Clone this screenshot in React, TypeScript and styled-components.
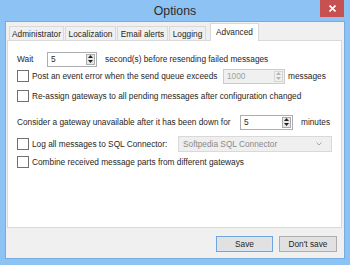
import * as React from 'react';
import styled, {createGlobalStyle} from 'styled-components';

const GlobalStyle = createGlobalStyle`
  html, body {
    margin: 0;
    padding: 0;
  }
  body {
    font-family: "Liberation Sans", Arial, sans-serif;
    font-size: 8.3px;
    color: #262626;
  }
`;

const SWindow = styled('div')`
  width: 350px;
  height: 265px;
  box-sizing: border-box;
  background: #8dc3f4;
  padding: 0 5px 6px 5px;
  display: flex;
  flex-direction: column;
`;

const STitleBar = styled('div')`
  height: 21px;
  display: grid;
  grid-template-columns: 1fr auto 1fr;
  align-items: start;
`;

const STitle = styled('div')`
  grid-column: 2;
  font-size: 12.3px;
  line-height: 22px;
  color: #2b2b2b;
`;

const SClose = styled('div')`
  grid-column: 3;
  justify-self: end;
  margin-right: 1px;
  width: 24px;
  height: 17px;
  background: #c75050;
  display: flex;
  align-items: center;
  justify-content: center;
`;

const SClient = styled('div')`
  flex: 1;
  border: 1px solid #78acdf;
  background: #f0f0f0;
  display: flex;
  flex-direction: column;
`;

const STabStrip = styled('div')`
  height: 19px;
  padding-left: 3px;
  display: flex;
  align-items: flex-end;
`;

const STab = styled('div')<{ $active?: boolean; $w: number }>`
  position: relative;
  z-index: ${p => (p.$active ? 2 : 0)};
  box-sizing: border-box;
  width: ${p => p.$w}px;
  height: ${p => (p.$active ? 18 : 15)}px;
  margin-left: ${p => (p.$active ? 4 : 1)}px;
  border: 1px solid #d9d9d9;
  border-bottom: 0;
  background: ${p => (p.$active ? '#ffffff' : '#f0f0f0')};
  display: flex;
  justify-content: center;
  padding-top: ${p => (p.$active ? 3 : 2)}px;
  white-space: nowrap;
  &:first-child {
    margin-left: 0;
  }
`;

const SPanel = styled('div')`
  position: relative;
  z-index: 1;
  margin: -1px 2px 0 1px;
  height: 188px;
  box-sizing: border-box;
  background: #ffffff;
  border: 1px solid #d9d9d9;
  padding: 9px 0 0 9px;
  display: flex;
  flex-direction: column;
`;

const SRow = styled('div')<{ $top: number }>`
  height: 16px;
  margin-top: ${p => p.$top}px;
  display: flex;
  align-items: center;
  white-space: nowrap;
`;

const SLabel = styled('span')<{ $w?: number; $ml?: number }>`
  display: inline-block;
  width: ${p => (p.$w ? `${p.$w}px` : 'auto')};
  margin-left: ${p => p.$ml || 0}px;
`;

const SCheck = styled('span')`
  width: 12px;
  height: 12px;
  box-sizing: border-box;
  border: 1px solid #707070;
  background: #fff;
  margin-right: 3px;
  flex: none;
`;

const SSpin = styled('div')<{ $w: number; $disabled?: boolean }>`
  width: ${p => p.$w}px;
  height: 15px;
  box-sizing: border-box;
  border: 1px solid ${p => (p.$disabled ? '#cccccc' : '#abadb3')};
  background: ${p => (p.$disabled ? '#f0f0f0' : '#ffffff')};
  color: ${p => (p.$disabled ? '#a0a0a0' : '#1e1e1e')};
  display: flex;
  align-items: center;
  padding-left: 3px;
  flex: none;
`;

const SSpinValue = styled('span')`
  flex: 1;
`;

const SSpinButtons = styled('div')<{ $disabled?: boolean }>`
  width: 9px;
  height: 11px;
  margin-right: 1px;
  box-sizing: border-box;
  border: 1px solid ${p => (p.$disabled ? '#d6d6d6' : '#acacac')};
  background: ${p => (p.$disabled ? '#f0f0f0' : '#e8e8e8')};
  display: flex;
  flex-direction: column;
  align-items: center;
  justify-content: space-around;
`;

const SCombo = styled('div')<{ $w: number }>`
  width: ${p => p.$w}px;
  height: 16px;
  box-sizing: border-box;
  border: 1px solid #d9d9d9;
  background: #efefef;
  color: #8a8a8a;
  display: flex;
  align-items: center;
  justify-content: space-between;
  padding: 0 9px 0 4px;
`;

const SButtonBar = styled('div')`
  flex: 1;
  display: flex;
  align-items: center;
  justify-content: flex-end;
  gap: 6px;
  padding: 1px 7px 0 0;
`;

const SButton = styled('div')<{ $default?: boolean; $w: number }>`
  width: ${p => p.$w}px;
  height: 16px;
  box-sizing: border-box;
  border: 1px solid ${p => (p.$default ? '#6aa5de' : '#adadad')};
  box-shadow: ${p => (p.$default ? 'inset 0 0 0 1px #d4e6f7' : 'none')};
  background: #e1e1e1;
  display: flex;
  align-items: center;
  justify-content: center;
`;

const Arrow = ({up, color}: { up?: boolean; color: string }) => (
  <svg width="5" height="3" viewBox="0 0 5 3">
    <polygon points={up ? '2.5,0 5,3 0,3' : '0,0 5,0 2.5,3'} fill={color}/>
  </svg>
);

const Spinner = ({value, width, disabled}: { value: string; width: number; disabled?: boolean }) => {
  const color = disabled ? '#b5b5b5' : '#222';
  return (
    <SSpin $w={width} $disabled={disabled}>
      <SSpinValue>{value}</SSpinValue>
      <SSpinButtons $disabled={disabled}>
        <Arrow up color={color}/>
        <Arrow color={color}/>
      </SSpinButtons>
    </SSpin>
  );
};

const tabs = [
  {label: 'Administrator', w: 55},
  {label: 'Localization', w: 51},
  {label: 'Email alerts', w: 51},
  {label: 'Logging', w: 37},
];

export default function App() {
  return (
    <>
      <GlobalStyle/>
      <SWindow>
        <STitleBar>
          <STitle>Options</STitle>
          <SClose>
            <svg width="7" height="7" viewBox="0 0 7 7">
              <path d="M0.5 0.5 L6.5 6.5 M6.5 0.5 L0.5 6.5" stroke="#fff" strokeWidth="1.6"/>
            </svg>
          </SClose>
        </STitleBar>
        <SClient>
          <STabStrip>
            {tabs.map(t => (
              <STab key={t.label} $w={t.w}>{t.label}</STab>
            ))}
            <STab $active $w={49}>Advanced</STab>
          </STabStrip>
          <SPanel>
            <SRow $top={1}>
              <SLabel $w={30}>Wait</SLabel>
              <Spinner value="5" width={50}/>
              <SLabel $ml={8}>second(s) before resending failed messages</SLabel>
            </SRow>
            <SRow $top={1}>
              <SCheck/>
              <SLabel $w={191}>Post an event error when the send queue exceeds</SLabel>
              <Spinner value="1000" width={62} disabled/>
              <SLabel $ml={3}>messages</SLabel>
            </SRow>
            <SRow $top={4}>
              <SCheck/>
              <SLabel>Re-assign gateways to all pending messages after configuration changed</SLabel>
            </SRow>
            <SRow $top={10}>
              <SLabel $w={223}>Consider a gateway unavailable after it has been down for</SLabel>
              <Spinner value="5" width={53}/>
              <SLabel $ml={8}>minutes</SLabel>
            </SRow>
            <SRow $top={6}>
              <SCheck/>
              <SLabel $w={146}>Log all messages to SQL Connector:</SLabel>
              <SCombo $w={154}>
                <span>Softpedia SQL Connector</span>
                <svg width="6" height="4" viewBox="0 0 6 4">
                  <path d="M0.5 0.5 L3 3 L5.5 0.5" stroke="#a8a8a8" fill="none" strokeWidth="1"/>
                </svg>
              </SCombo>
            </SRow>
            <SRow $top={2}>
              <SCheck/>
              <SLabel>Combine received message parts from different gateways</SLabel>
            </SRow>
          </SPanel>
          <SButtonBar>
            <SButton $default $w={57}>Save</SButton>
            <SButton $w={58}>Don't save</SButton>
          </SButtonBar>
        </SClient>
      </SWindow>
    </>
  );
}
